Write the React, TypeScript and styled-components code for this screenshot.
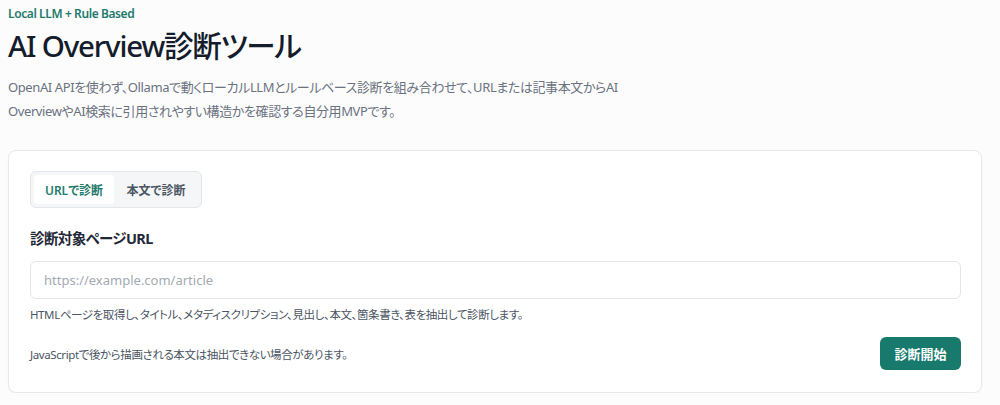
import React, { useState } from "react";
import styled, { createGlobalStyle } from "styled-components";

const GlobalStyle = createGlobalStyle`
  html, body {
    margin: 0;
    padding: 0;
    background: #fcfcfc;
  }
  body {
    font-family: "Noto Sans", "Noto Sans CJK JP", sans-serif;
    font-feature-settings: "palt" 1;
    color: #1f2937;
  }
  * { box-sizing: border-box; }
`;

const Page = styled.main`
  width: 974px;
  margin-left: 8px;
  padding-top: 5px;
`;

const Eyebrow = styled.div`
  font-size: 12px;
  font-weight: 600;
  letter-spacing: -0.4px;
  color: #1f7a6c;
  line-height: 18px;
`;

const Title = styled.h1`
  margin: 3px 0 0;
  font-size: 29.5px;
  font-weight: 500;
  line-height: 40px;
  color: #151c2c;
  letter-spacing: -1.2px;
`;

const Lead = styled.p`
  margin: 9px 0 0;
  max-width: 640px;
  font-size: 13px;
  letter-spacing: -0.4px;
  line-height: 24px;
  color: #6b7280;
`;

const Card = styled.section`
  margin-top: 27px;
  background: #ffffff;
  border: 1px solid #e6e8eb;
  border-radius: 8px;
  box-shadow: 0 1px 2px rgba(0, 0, 0, 0.03);
  padding: 20px 20px 22px 21px;
  display: flex;
  flex-direction: column;
`;

const Tabs = styled.div`
  align-self: flex-start;
  display: flex;
  padding: 3px;
  background: #f5f6f8;
  border: 1px solid #e3e6ea;
  border-radius: 6px;
`;

const Tab = styled.button<{ $active?: boolean }>`
  font-family: inherit;
  font-feature-settings: inherit;
  border: none;
  border-radius: 4px;
  height: 29px;
  padding: 0;
  width: ${(p) => (p.$active ? "80px" : "84px")};
  font-size: 12px;
  font-weight: 600;
  cursor: pointer;
  background: ${(p) => (p.$active ? "#ffffff" : "transparent")};
  color: ${(p) => (p.$active ? "#1f7a6c" : "#4b5563")};
`;

const Label = styled.label`
  margin-top: 19px;
  font-size: 14.5px;
  font-weight: 700;
  letter-spacing: -0.6px;
  line-height: 22px;
  color: #1f2937;
`;

const Input = styled.input`
  margin-top: 12px;
  width: 100%;
  height: 38px;
  padding: 0 13px;
  font-family: inherit;
  font-size: 13px;
  color: #1f2937;
  border: 1px solid #e3e6ea;
  border-radius: 6px;
  background: #ffffff;
  outline: none;
  &::placeholder {
    color: #a3a9b1;
  }
`;

const Hint = styled.p`
  margin: 8px 0 0;
  font-size: 11.5px;
  letter-spacing: -0.4px;
  line-height: 16px;
  color: #4b5563;
`;

const Footer = styled.div`
  margin-top: 14px;
  display: flex;
  align-items: center;
  justify-content: space-between;
`;

const Note = styled.span`
  font-size: 11.5px;
  letter-spacing: -0.4px;
  color: #4b5563;
`;

const Submit = styled.button`
  height: 33px;
  width: 81px;
  border: none;
  border-radius: 6px;
  background: #177a6d;
  color: #ffffff;
  font-family: inherit;
  font-feature-settings: inherit;
  font-size: 13px;
  font-weight: 700;
  cursor: pointer;
`;

export default function App() {
  const [tab, setTab] = useState<"url" | "text">("url");
  return (
    <>
      <GlobalStyle />
      <Page>
        <Eyebrow>Local LLM + Rule Based</Eyebrow>
        <Title>AI Overview診断ツール</Title>
        <Lead>
          OpenAI APIを使わず、Ollamaで動くローカルLLMとルールベース診断を組み合わせて、URLまたは記事本文からAI
          OverviewやAI検索に引用されやすい構造かを確認する自分用MVPです。
        </Lead>
        <Card>
          <Tabs>
            <Tab $active={tab === "url"} onClick={() => setTab("url")}>
              URLで診断
            </Tab>
            <Tab $active={tab === "text"} onClick={() => setTab("text")}>
              本文で診断
            </Tab>
          </Tabs>
          <Label htmlFor="url">診断対象ページURL</Label>
          <Input id="url" placeholder="https://example.com/article" />
          <Hint>
            HTMLページを取得し、タイトル、メタディスクリプション、見出し、本文、箇条書き、表を抽出して診断します。
          </Hint>
          <Footer>
            <Note>JavaScriptで後から描画される本文は抽出できない場合があります。</Note>
            <Submit>診断開始</Submit>
          </Footer>
        </Card>
      </Page>
    </>
  );
}
